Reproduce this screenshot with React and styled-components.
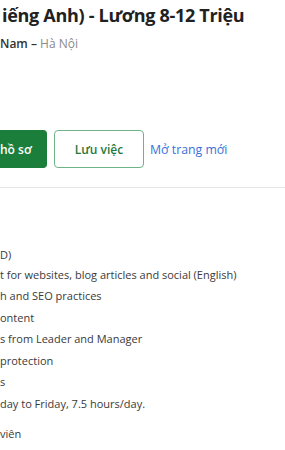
import styled, { createGlobalStyle } from 'styled-components';

const GlobalStyle = createGlobalStyle`
  html, body {
    margin: 0;
    padding: 0;
    background: #fff;
  }
  body {
    font-family: "Open Sans", "Noto Sans", sans-serif;
    overflow: hidden;
  }
`;

const Page = styled.div`
  width: 285px;
  height: 450px;
  overflow: hidden;
  background: #fff;
`;

const Header = styled.div`
  padding-top: 2px;
`;

const Title = styled.div`
  font-size: 18px;
  font-weight: 700;
  color: #212121;
  line-height: 26px;
  letter-spacing: -0.3px;
  padding-left: 2px;
  white-space: nowrap;
`;

const Company = styled.div`
  margin-top: 8px;
  font-size: 12px;
  line-height: 16px;
  font-weight: 600;
  color: #333;
  white-space: nowrap;
`;

const Place = styled.span`
  font-weight: 400;
  color: #8a8a8a;
`;

const Actions = styled.div`
  display: flex;
  align-items: center;
  gap: 7px;
  margin-top: 78px;
`;

const Button = styled.button`
  height: 38px;
  border-radius: ${(p) => (p.$primary ? '0 4px 4px 0' : '4px')};
  font-family: "Open Sans", sans-serif;
  font-size: 12px;
  font-weight: 600;
  padding: ${(p) => (p.$primary ? '0 19px 0 0' : '0')};
  text-align: ${(p) => (p.$primary ? 'right' : 'center')};
  white-space: nowrap;
  cursor: pointer;
  border: 1.5px solid ${(p) => (p.$primary ? '#1b7f3b' : '#6fb487')};
  border-left-width: ${(p) => (p.$primary ? 0 : '1.5px')};
  background: ${(p) => (p.$primary ? '#1b7f3b' : '#fff')};
  color: ${(p) => (p.$primary ? '#fff' : '#1f7a40')};
  width: ${(p) => p.$w}px;
`;

const LinkText = styled.a`
  font-size: 12.3px;
  color: #3a6fd8;
  text-decoration: none;
  margin-left: -1px;
  white-space: nowrap;
`;

const Divider = styled.hr`
  border: 0;
  border-top: 1px solid #e6e6e6;
  margin: 19px 0 0;
`;

const List = styled.div`
  margin-top: 56px;
  display: flex;
  flex-direction: column;
  font-family: "Open Sans", sans-serif;
  font-size: 11px;
  color: #3a3a3a;
`;

const Line = styled.div`
  line-height: 21.5px;
  white-space: nowrap;
  margin-top: ${(p) => p.$gap || 0}px;
`;

const lines = [
  { text: 'D)' },
  { text: 't for websites, blog articles and social (English)', gap: -2 },
  { text: 'h and SEO practices' },
  { text: 'ontent' },
  { text: 's from Leader and Manager' },
  { text: 'protection' },
  { text: 's' },
  { text: 'day to Friday, 7.5 hours/day.' },
  { text: 'viên', gap: 9 },
];

export default function App() {
  return (
    <Page>
      <GlobalStyle />
      <Header>
        <Title>iếng Anh) - Lương 8-12 Triệu</Title>
        <Company>
          Nam – <Place>Hà Nội</Place>
        </Company>
      </Header>
      <Actions>
        <Button $primary $w={47}>hồ sơ</Button>
        <Button $w={90}>Lưu việc</Button>
        <LinkText href="#">Mở trang mới</LinkText>
      </Actions>
      <Divider />
      <List>
        {lines.map((l) => (
          <Line key={l.text} $gap={l.gap}>
            {l.text}
          </Line>
        ))}
      </List>
    </Page>
  );
}
